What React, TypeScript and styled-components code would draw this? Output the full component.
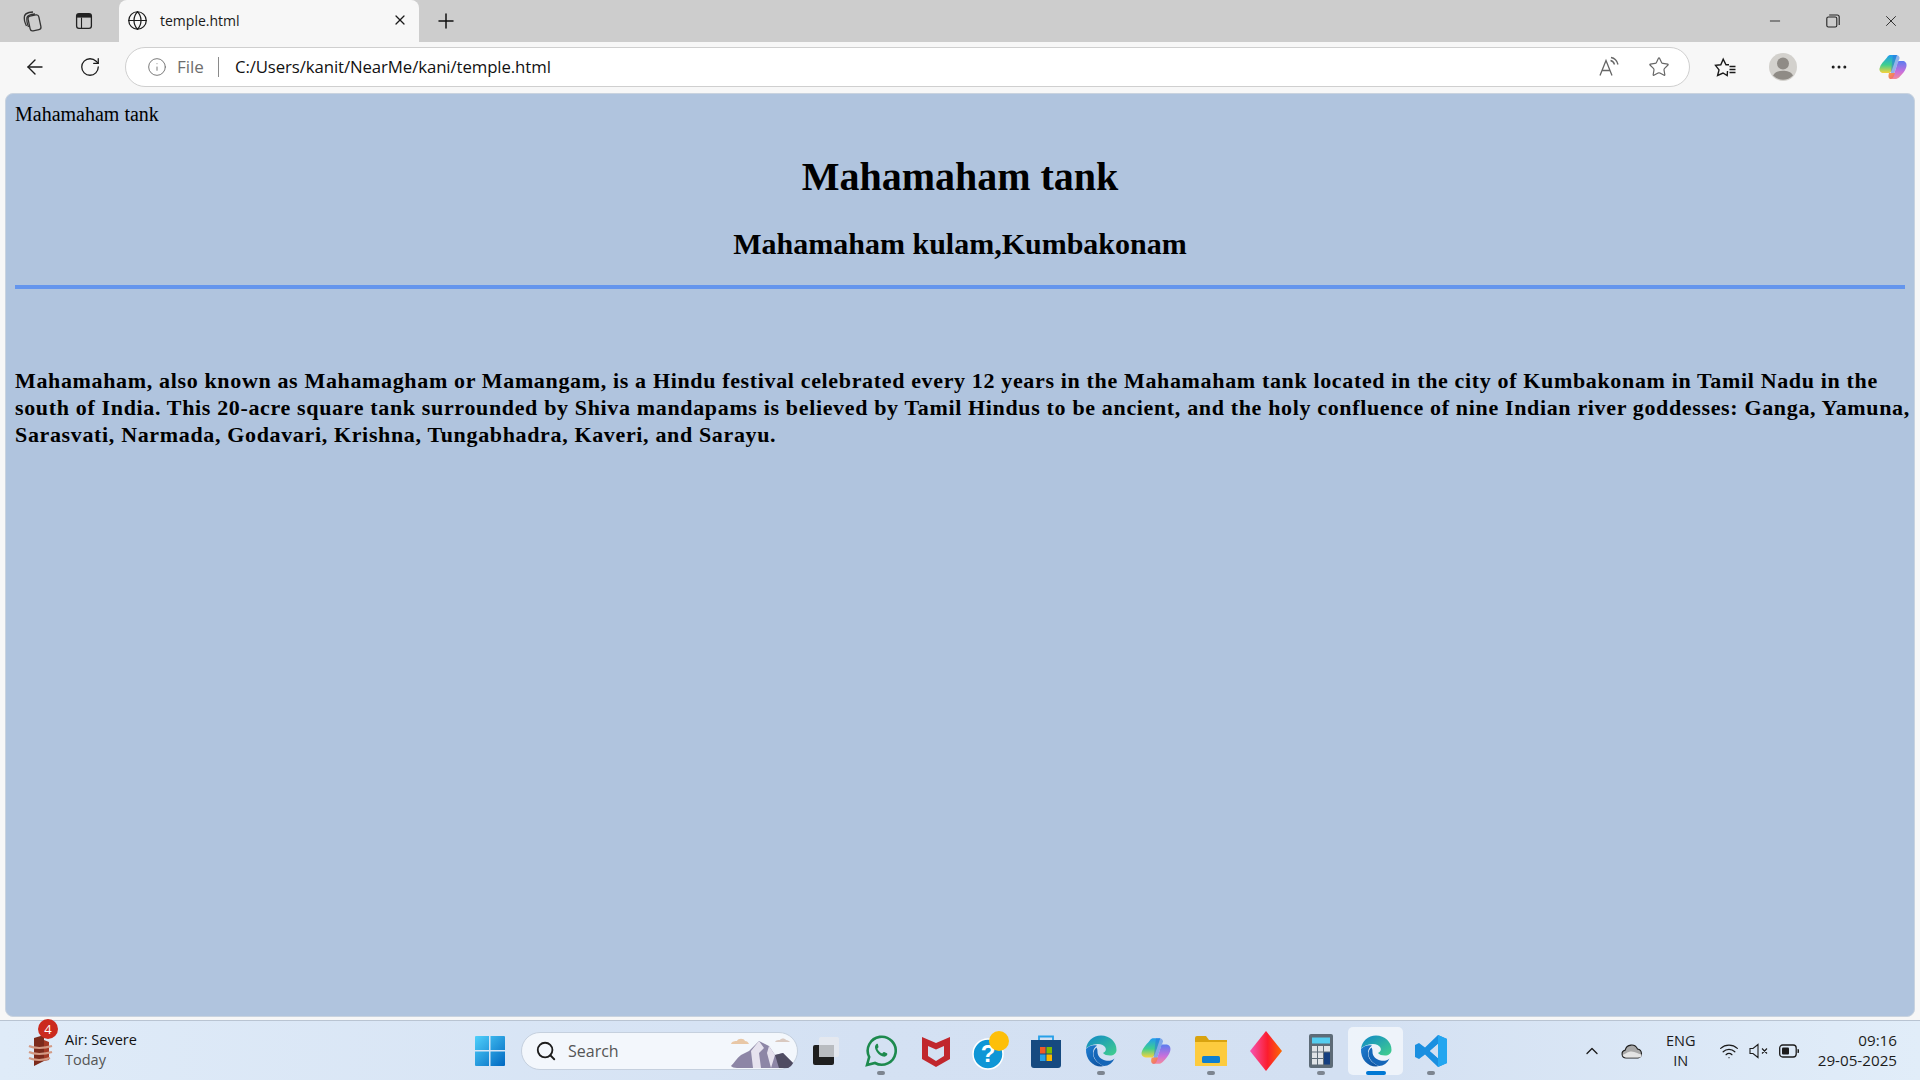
import React from "react";
import styled, { createGlobalStyle } from "styled-components";
import { ArrowLeft, RotateCw, Info, Plus, X, Minus, Star, Globe, Search, ChevronUp, Wifi, MoreHorizontal } from "lucide-react";

const GlobalStyle = createGlobalStyle`
  html, body { margin: 0; padding: 0; height: 100%; overflow: hidden; }
  #root { height: 100%; }
`;

const Screen = styled.div`
  width: 1920px;
  height: 1080px;
  display: flex;
  flex-direction: column;
  background: #f7f7f7;
  font-family: "Open Sans", "Noto Sans", sans-serif;
  overflow: hidden;
`;

const TabStrip = styled.div`
  height: 42px;
  flex: none;
  display: flex;
  align-items: stretch;
  background: #cdcdcd;
`;

const StripButton = styled.div`
  width: 52px;
  flex: none;
  display: flex;
  align-items: center;
  justify-content: center;
  color: #222;
`;

const StripLead = styled.div`
  display: flex;
  padding-left: 6px;
  width: 119px;
  flex: none;
  box-sizing: border-box;
`;

const Tab = styled.div`
  width: 300px;
  flex: none;
  box-sizing: border-box;
  display: flex;
  align-items: center;
  gap: 12px;
  padding: 0 11px 2px 8px;
  background: #f7f7f7;
  border-radius: 8px 8px 0 0;
  font-size: 14px;
  color: #1a1a1a;
`;

const TabTitle = styled.span`
  flex: 1;
`;

const NewTab = styled.div`
  width: 54px;
  display: flex;
  align-items: center;
  justify-content: center;
  color: #111;
`;

const WindowButtons = styled.div`
  margin-left: auto;
  display: flex;
`;

const WindowButton = styled.div`
  width: 58px;
  display: flex;
  align-items: center;
  justify-content: center;
  color: #222;
`;

const Toolbar = styled.div`
  height: 51px;
  flex: none;
  display: flex;
  align-items: center;
  box-sizing: border-box;
  padding: 0 0 2px 7px;
  background: #f7f7f7;
`;

const NavButton = styled.div`
  width: 55px;
  height: 40px;
  flex: none;
  display: flex;
  align-items: center;
  justify-content: center;
  color: #1c1c1c;
`;

const AddressBar = styled.div`
  width: 1565px;
  height: 40px;
  flex: none;
  margin-left: 8px;
  box-sizing: border-box;
  display: flex;
  align-items: center;
  padding: 0 19px 0 21px;
  background: #fff;
  border: 1px solid #cfcfcf;
  border-radius: 20px;
`;

const FileLabel = styled.span`
  margin-left: 10px;
  font-size: 17px;
  color: #6e6e6e;
`;

const Divider = styled.span`
  width: 1px;
  height: 20px;
  margin: 0 16px 0 14px;
  background: #8a8a8a;
`;

const Url = styled.span`
  flex: 1;
  font-size: 16.8px;
  color: #111;
  letter-spacing: -0.1px;
`;

const BarIcons = styled.div`
  display: flex;
  align-items: center;
  gap: 28px;
  color: #666;
`;

const ToolIcons = styled.div`
  display: flex;
  align-items: center;
  padding-left: 6px;
`;

const ToolSlot = styled.div<{ $width: number }>`
  width: ${(p) => p.$width}px;
  display: flex;
  align-items: center;
  justify-content: center;
  color: #1a1a1a;
`;

const Page = styled.main`
  flex: none;
  height: 924px;
  margin: 0 5px 0 5px;
  box-sizing: border-box;
  padding: 9px 9px;
  background: #b0c4de;
  border-radius: 8px;
  border: 1px solid #c9d3df;
  font-family: "Liberation Serif", "Times New Roman", serif;
  color: #000;
`;

const Lead = styled.div`
  font-size: 20px;
  line-height: 23px;
`;

const Heading = styled.h1`
  margin: 28px 0 0;
  text-align: center;
  font-size: 40px;
  line-height: 46px;
`;

const SubHeading = styled.h2`
  margin: 27px 0 0;
  text-align: center;
  font-size: 30px;
  line-height: 34px;
`;

const Rule = styled.div`
  height: 4px;
  margin-top: 24px;
  background: #6495ed;
`;

const Body = styled.p`
  margin: 78px -8px 0 0;
  font-size: 22px;
  line-height: 27px;
  font-weight: bold;
  letter-spacing: 0.65px;
`;

const Taskbar = styled.footer`
  flex: 1;
  margin-top: 3px;
  display: flex;
  align-items: center;
  border-top: 1px solid #b9c4d2;
  background: linear-gradient(90deg, #dfebf8 0%, #d4e1f3 45%, #d3e0f2 70%, #e1edf9 100%);
`;

const Weather = styled.div`
  width: 455px;
  flex: none;
  box-sizing: border-box;
  display: flex;
  align-items: center;
  padding-left: 28px;
  gap: 11px;
  position: relative;
`;

const WeatherBadge = styled.span`
  position: absolute;
  left: 38px;
  top: -11px;
  width: 20px;
  height: 20px;
  border-radius: 50%;
  background: #cb2a1e;
  color: #fff;
  font-size: 13px;
  display: flex;
  align-items: center;
  justify-content: center;
`;

const WeatherText = styled.div`
  display: flex;
  flex-direction: column;
  margin-bottom: 2px;
  font-size: 14.5px;
  line-height: 20px;
  color: #111;
`;

const Muted = styled.span`
  color: #555;
`;

const Center = styled.div`
  display: flex;
  align-items: center;
  height: 100%;
`;

const StartButton = styled.div`
  width: 66px;
  flex: none;
  display: flex;
  align-items: center;
  justify-content: center;
  padding-left: 3px;
  box-sizing: border-box;
`;

const SearchBox = styled.div`
  width: 277px;
  height: 38px;
  flex: none;
  box-sizing: border-box;
  display: flex;
  align-items: center;
  gap: 11px;
  padding-left: 13px;
  background: #f3f7fc;
  border: 1px solid #c5d0de;
  border-radius: 19px;
  font-size: 16px;
  color: #555;
`;

const SearchArt = styled.div`
  margin-left: auto;
  margin-right: 2px;
  display: flex;
`;

const TaskIcon = styled.div<{ $active?: boolean }>`
  width: 55px;
  height: 48px;
  flex: none;
  position: relative;
  display: flex;
  align-items: center;
  justify-content: center;
  border-radius: 5px;
  background: ${(p) => (p.$active ? "rgba(255,255,255,0.6)" : "transparent")};
`;

const RunDot = styled.span<{ $active?: boolean }>`
  position: absolute;
  bottom: 0;
  left: 50%;
  transform: translateX(-50%);
  width: ${(p) => (p.$active ? "20px" : "8px")};
  height: 4px;
  border-radius: 2px;
  background: ${(p) => (p.$active ? "#0078d4" : "#7d8590")};
`;

const Tray = styled.div`
  margin-left: auto;
  display: flex;
  align-items: center;
  color: #1c1c1c;
  padding-right: 23px;
`;

const TrayChevron = styled.div`
  display: flex;
  margin-right: 19px;
`;

const Lang = styled.div`
  width: 34px;
  margin: 0 21px 0 21px;
  text-align: center;
  font-size: 14.5px;
  line-height: 20px;
`;

const TrayIcons = styled.div`
  display: flex;
  align-items: center;
  gap: 10px;
  margin-right: 19px;
`;

const Clock = styled.div`
  margin-bottom: 2px;
  text-align: right;
  font-size: 15.2px;
  line-height: 20px;
`;

const TabsIcon = () => (
  <svg width="24" height="24" viewBox="0 0 24 24" fill="none" stroke="#333" strokeWidth="1.3">
    <rect x="9" y="6.5" width="11" height="15" rx="2.5" transform="rotate(-12 14 14)" />
    <path d="M6.5 17 C4.5 13 3.8 10 4.5 7 C5 5 7 4 9 3.5 L13 3" />
    <path d="M8.5 18 C7 14 6.5 11 7 8.5 C7.5 6.5 10 5.5 15 5" />
  </svg>
);

const VerticalTabsIcon = () => (
  <svg width="20" height="20" viewBox="0 0 20 20">
    <rect x="2.6" y="2.6" width="14.8" height="14.8" rx="2.4" fill="none" stroke="#222" strokeWidth="1.3" />
    <path d="M3 3h14v3.6H3z" fill="#222" />
    <path d="M7.5 6.5v11" stroke="#222" strokeWidth="1.1" />
  </svg>
);

const RestoreIcon = () => (
  <svg width="14" height="14" viewBox="0 0 14 14" fill="none" stroke="#222" strokeWidth="1.1">
    <rect x="0.8" y="3" width="10" height="10" rx="1.6" />
    <path d="M3.2 1h8a2 2 0 0 1 2 2v8" />
  </svg>
);

const ReadAloudIcon = () => (
  <svg width="22" height="22" viewBox="0 0 22 22" fill="none" stroke="#666" strokeWidth="1.3">
    <path d="M2 19.5 8 4.5 14 19.5M4.2 14.5h7.6" />
    <path d="M12.5 4.5c2 .4 3.4 1.8 4 4M13 1.5c3.4.6 6 3 7 7" />
  </svg>
);

const FavoritesIcon = () => (
  <svg width="22" height="22" viewBox="0 0 22 22" fill="none" stroke="#1a1a1a" strokeWidth="1.4">
    <path d="M13.5 15 13.2 19.5 9 17 3.6 19.5 5 13.9 1.5 9.4 6.8 8.8 9.2 3.2 12 8.8h3" />
    <path d="M15.5 10.5h6M15.5 13.5h6M15.5 16.5h6" />
  </svg>
);

const Avatar = () => (
  <svg width="28" height="28" viewBox="0 0 28 28">
    <circle cx="14" cy="14" r="14" fill="#d3d1cd" />
    <circle cx="14" cy="10.5" r="6" fill="#8f8b86" />
    <path d="M4 22.5c2-4 6-4.8 10-4.8s8 .8 10 4.8a14 14 0 0 1-20 0z" fill="#8f8b86" />
  </svg>
);

const Copilot = ({ size = 30 }: { size?: number }) => (
  <svg width={size} height={size} viewBox="0 0 30 30">
    <defs>
      <linearGradient id="copA" x1="0" y1="0" x2="0" y2="1">
        <stop offset="0" stopColor="#1f9bf0" />
        <stop offset="0.55" stopColor="#3fcf8e" />
        <stop offset="1" stopColor="#f7d33c" />
      </linearGradient>
      <linearGradient id="copB" x1="0" y1="0" x2="0" y2="1">
        <stop offset="0" stopColor="#5a7cf0" />
        <stop offset="0.6" stopColor="#c86fdc" />
        <stop offset="1" stopColor="#f58a9a" />
      </linearGradient>
      <linearGradient id="copC" x1="0" y1="0" x2="1" y2="1">
        <stop offset="0" stopColor="#f5a04a" />
        <stop offset="1" stopColor="#f0607a" />
      </linearGradient>
    </defs>
    <path d="M9 5.5C10 3.5 11.5 3 13 3h6L15 15c-1.2 4-2.4 6-4 6H5.5C3 21 1 19 1.5 16.5 2.3 12.5 6 9 9 5.5z" fill="url(#copA)" />
    <path d="M15 3h3.5C20 3 21 4 21.5 5.5 22 7 20 9 19 13l-2 6c-1 3.5-2.5 7-4.5 8h-.5" fill="#2b6fe0" opacity="0.5" />
    <path d="M21 9h3.5C27 9 29 11 28.5 14c-.6 4-4 8-7 11-1.5 1.5-3 2-4.5 2h-5c2.5-1 4-4 5-8l2-6c.5-2 1-4 2-4z" fill="url(#copB)" />
    <path d="M11 21h6l-1.5 4c-.7 1.4-2 2-3.5 2-1.6-.5-2-3-1-6z" fill="url(#copC)" />
  </svg>
);

const WeatherIcon = () => (
  <svg width="26" height="38" viewBox="0 0 26 38">
    <path d="M6 6l10-3v26L6 34z" fill="#7c2b1c" />
    <path d="M16 8l5 2v18l-5 1z" fill="#a33a25" />
    <path d="M1 14c5 2.5 15 2.5 23 0M1 20c5 2.5 15 2.5 23 0M1 26c5 2.5 15 2.5 21 0" stroke="#d39a84" strokeWidth="2" fill="none" />
  </svg>
);

const WindowsLogo = () => (
  <svg width="30" height="30" viewBox="0 0 30 30">
    <defs>
      <linearGradient id="winG" x1="0" y1="0" x2="1" y2="1">
        <stop offset="0" stopColor="#4fd0fb" />
        <stop offset="1" stopColor="#0067c0" />
      </linearGradient>
    </defs>
    <path d="M0 1a1 1 0 0 1 1-1h13v14H0zM15.5 0H29a1 1 0 0 1 1 1v13H15.5zM0 15.5h14V30H1a1 1 0 0 1-1-1zM15.5 15.5H30V29a1 1 0 0 1-1 1H15.5z" fill="url(#winG)" />
  </svg>
);

const Mountains = () => (
  <svg width="66" height="36" viewBox="0 0 66 36">
    <path d="M2 11c1-3 4-3 6-3 1-3 7-3 8 0 2 0 3 1 4 3z" fill="#e8c7a6" />
    <path d="M46 9c1-2 3-2 5-2 1-2 5-2 6 0 2 0 3 1 4 2z" fill="#d9c9c0" />
    <path d="M2 33c3-3 6-8 10-11l8-4 10-10 10 5 6 9 8-2 10 10c-1 2-3 4-5 5H8c-3 0-5-1-6-2z" fill="#8d86a6" />
    <path d="M22 18l8-10 5 7-5 5 2 15H24zM40 13l6 9-4 13-4-15z" fill="#e6e2ee" />
    <path d="M46 22l8-2 10 10c-1 2-3 4-5 5h-9z" fill="#4f4c62" />
  </svg>
);

const TaskView = () => (
  <svg width="28" height="30" viewBox="0 0 28 30">
    <rect x="1" y="9" width="21" height="20" rx="2" fill="#1f1f1f" />
    <rect x="7" y="1" width="20" height="20" rx="2" fill="#e6e9ee" opacity="0.9" />
    <rect x="7" y="9" width="15" height="12" fill="#b9bcc0" />
  </svg>
);

const WhatsApp = () => (
  <svg width="32" height="32" viewBox="0 0 32 32">
    <path d="M2 30l2.2-8A14 14 0 1 1 10 28z" fill="none" stroke="#1d8a4e" strokeWidth="2.6" />
    <path d="M11.5 9c-1.5 1-2 3-1 5.5 1.5 3.5 4 6 7.5 7 2 .5 3.5-.3 4.3-2 .2-.5 0-1-.4-1.2l-2.7-1.3c-.5-.2-.9 0-1.2.4l-.8 1c-2.3-.9-3.9-2.5-4.9-4.7l.9-1c.3-.3.3-.8.2-1.1L12.9 9.3c-.3-.6-.9-.6-1.4-.3z" fill="#1d8a4e" />
  </svg>
);

const McAfee = () => (
  <svg width="28" height="32" viewBox="0 0 28 32">
    <path d="M0 2l14 6 14-6v22l-14 8-14-8zM6 11v10l8 5 8-5V11l-8 3.5z" fill="#c1272d" fillRule="evenodd" />
  </svg>
);

const HelpIcon = () => (
  <svg width="42" height="40" viewBox="0 0 42 40">
    <circle cx="18" cy="23" r="15" fill="#0f96d6" stroke="#fff" strokeWidth="1.5" />
    <text x="18" y="31" textAnchor="middle" fontSize="24" fontWeight="700" fill="#fff" fontFamily="Liberation Sans, sans-serif">?</text>
    <circle cx="29" cy="10" r="10" fill="#fdbf0a" />
  </svg>
);

const StoreIcon = () => (
  <svg width="30" height="34" viewBox="0 0 30 34">
    <path d="M8 6V2.5h14V6" fill="none" stroke="#27a0e8" strokeWidth="1.8" />
    <path d="M0 6h30v25a3 3 0 0 1-3 3H3a3 3 0 0 1-3-3z" fill="#164a80" />
    <rect x="9" y="13" width="5.5" height="6.5" fill="#f05a28" />
    <rect x="15.5" y="13" width="5.5" height="6.5" fill="#7fba00" />
    <rect x="9" y="20.5" width="5.5" height="6.5" fill="#27a0e8" />
    <rect x="15.5" y="20.5" width="5.5" height="6.5" fill="#fdb900" />
  </svg>
);

const Edge = ({ id }: { id: string }) => (
  <svg width="32" height="32" viewBox="0 0 32 32">
    <defs>
      <linearGradient id={`${id}a`} x1="0" y1="0" x2="1" y2="1">
        <stop offset="0" stopColor="#0f86c9" />
        <stop offset="1" stopColor="#43d18c" />
      </linearGradient>
      <linearGradient id={`${id}b`} x1="0" y1="0" x2="1" y2="1">
        <stop offset="0" stopColor="#1f7fd4" />
        <stop offset="1" stopColor="#0b4c98" />
      </linearGradient>
    </defs>
    <path d="M1 14C2 6 8 .5 16 .5c9 0 15.5 6.5 15.5 14.5 0 3.5-3 5.5-6.5 5.5-3 0-6-.8-7-2.5 2.5-1 3.5-3 2.5-5.2C19 9.5 14 8 9 9.5 5 10.5 2 12 1 14z" fill={`url(#${id}a)`} />
    <path d="M1 14c2.5-3 7-4.5 11-3.5-3 2-4.5 5-4 9 .7 5 5 9.5 11 11.5-1 .3-2 .5-3 .5C7.5 31.5 .5 24 1 14z" fill={`url(#${id}b)`} />
    <path d="M12.5 17c0 4 3.5 7.5 8 8.5 3.5.8 7 0 9-2-2 4.5-6 7.5-10.5 7.5-5-2-9.5-6-10.5-11-.4-3 .6-5.5 3-7.5.8 1.2 1 2.8 1 4.5z" fill="#1566b8" />
  </svg>
);

const FolderIcon = () => (
  <svg width="32" height="30" viewBox="0 0 32 30">
    <path d="M0 2a2 2 0 0 1 2-2h9l3 4h18v26H0z" fill="#d9a30f" />
    <path d="M0 6h32v24H0z" fill="#fdcb3e" />
    <rect x="7" y="20" width="18" height="7" rx="1.5" fill="#0f7fd0" />
  </svg>
);

const DiamondIcon = () => (
  <svg width="32" height="40" viewBox="0 0 32 40">
    <defs>
      <linearGradient id="diaG" x1="0" y1="0" x2="1" y2="0">
        <stop offset="0" stopColor="#f654b4" />
        <stop offset="0.55" stopColor="#fb1d2e" />
        <stop offset="1" stopColor="#fb6a00" />
      </linearGradient>
    </defs>
    <path d="M16 0l16 20-16 20L0 20z" fill="url(#diaG)" />
  </svg>
);

const Calculator = () => (
  <svg width="24" height="34" viewBox="0 0 24 34">
    <rect width="24" height="34" rx="2" fill="#5d6b77" />
    <rect x="3" y="3.5" width="18" height="6" fill="#54cdf0" />
    {[0, 1, 2].map((r) =>
      [0, 1].map((c) => <rect key={`${r}${c}`} x={3 + c * 6} y={12 + r * 6.5} width="5" height="5.5" fill="#dfe3e7" />),
    )}
    <rect x="15" y="12" width="6" height="5.5" fill="#dfe3e7" />
    <rect x="15" y="18.5" width="6" height="12" fill="#153f80" />
  </svg>
);

const VsCode = () => (
  <svg width="32" height="32" viewBox="0 0 32 32">
    <path d="M23 0l9 4v24l-9 4-13-12.5-6 4.500-4-2v-12l4-2 6 4.500zM23 9l-8 7 8 7z" fill="#1a8fe0" fillRule="evenodd" />
    <path d="M23 0l9 4v24l-9 4z" fill="#23a6f0" />
    <path d="M23 9v14l-8-7z" fill="#d3e0f2" />
  </svg>
);

const CloudIcon = () => (
  <svg width="22" height="16" viewBox="0 0 22 16">
    <path d="M5 15a4 4 0 0 1-.8-7.9A6.500 6.500 0 0 1 16.500 6 4.600 4.600 0 0 1 17 15z" fill="#a8a8a8" stroke="#1c1c1c" strokeWidth="1.1" />
    <path d="M1.500 12c3-1 5-3.500 9-3.500 4 0 6 2.500 10 3v1a2.500 2.500 0 0 1-3 2H5a4 4 0 0 1-3.500-2.500z" fill="#e4e4e4" />
  </svg>
);

const MuteIcon = () => (
  <svg width="20" height="16" viewBox="0 0 20 16" fill="none" stroke="#1c1c1c" strokeWidth="1.1">
    <path d="M1 5.500h3L9 1.500v13l-5-4H1zM13 5.500l5 5M18 5.500l-5 5" />
  </svg>
);

const BatteryIcon = () => (
  <svg width="20" height="14" viewBox="0 0 20 14">
    <rect x="0.7" y="1" width="16.5" height="12" rx="3" fill="none" stroke="#1c1c1c" strokeWidth="1.3" />
    <rect x="3" y="3.5" width="7" height="7" rx="1" fill="#1c1c1c" />
    <path d="M18.5 5a2 2 0 0 1 0 4z" fill="#1c1c1c" />
  </svg>
);

const App = () => {
  return (
    <Screen>
      <GlobalStyle />
      <TabStrip>
        <StripLead>
          <StripButton><TabsIcon /></StripButton>
          <StripButton><VerticalTabsIcon /></StripButton>
        </StripLead>
        <Tab>
          <Globe size={21} strokeWidth={1.4} />
          <TabTitle>temple.html</TabTitle>
          <X size={16} strokeWidth={1.9} />
        </Tab>
        <NewTab><Plus size={24} strokeWidth={1.5} /></NewTab>
        <WindowButtons>
          <WindowButton><Minus size={16} strokeWidth={1.3} /></WindowButton>
          <WindowButton><RestoreIcon /></WindowButton>
          <WindowButton><X size={18} strokeWidth={1.2} /></WindowButton>
        </WindowButtons>
      </TabStrip>
      <Toolbar>
        <NavButton><ArrowLeft size={24} strokeWidth={1.4} /></NavButton>
        <NavButton><RotateCw size={22} strokeWidth={1.4} /></NavButton>
        <AddressBar>
          <Info size={20} strokeWidth={1.1} color="#6e6e6e" />
          <FileLabel>File</FileLabel>
          <Divider />
          <Url>C:/Users/kanit/NearMe/kani/temple.html</Url>
          <BarIcons>
            <ReadAloudIcon />
            <Star size={22} strokeWidth={1.3} />
          </BarIcons>
        </AddressBar>
        <ToolIcons>
          <ToolSlot $width={58}><FavoritesIcon /></ToolSlot>
          <ToolSlot $width={58}><Avatar /></ToolSlot>
          <ToolSlot $width={54}><MoreHorizontal size={20} strokeWidth={1.6} /></ToolSlot>
          <ToolSlot $width={54}><Copilot /></ToolSlot>
        </ToolIcons>
      </Toolbar>
      <Page>
        <Lead>Mahamaham tank</Lead>
        <Heading>Mahamaham tank</Heading>
        <SubHeading>Mahamaham kulam,Kumbakonam</SubHeading>
        <Rule />
        <Body>
          Mahamaham, also known as Mahamagham or Mamangam, is a Hindu festival celebrated every 12 years in the
          Mahamaham tank located in the city of Kumbakonam in Tamil Nadu in the south of India. This 20-acre square
          tank surrounded by Shiva mandapams is believed by Tamil Hindus to be ancient, and the holy confluence of nine
          Indian river goddesses: Ganga, Yamuna, Sarasvati, Narmada, Godavari, Krishna, Tungabhadra, Kaveri, and Sarayu.
        </Body>
      </Page>
      <Taskbar>
        <Weather>
          <WeatherIcon />
          <WeatherBadge>4</WeatherBadge>
          <WeatherText>
            <span>Air: Severe</span>
            <Muted>Today</Muted>
          </WeatherText>
        </Weather>
        <Center>
          <StartButton><WindowsLogo /></StartButton>
          <SearchBox>
            <Search size={22} strokeWidth={2} color="#1c1c1c" />
            Search
            <SearchArt><Mountains /></SearchArt>
          </SearchBox>
          <TaskIcon><TaskView /></TaskIcon>
          <TaskIcon><WhatsApp /><RunDot /></TaskIcon>
          <TaskIcon><McAfee /></TaskIcon>
          <TaskIcon><HelpIcon /></TaskIcon>
          <TaskIcon><StoreIcon /></TaskIcon>
          <TaskIcon><Edge id="edgeA" /><RunDot /></TaskIcon>
          <TaskIcon><Copilot size={32} /></TaskIcon>
          <TaskIcon><FolderIcon /><RunDot /></TaskIcon>
          <TaskIcon><DiamondIcon /></TaskIcon>
          <TaskIcon><Calculator /><RunDot /></TaskIcon>
          <TaskIcon $active><Edge id="edgeB" /><RunDot $active /></TaskIcon>
          <TaskIcon><VsCode /><RunDot /></TaskIcon>
        </Center>
        <Tray>
          <TrayChevron><ChevronUp size={20} strokeWidth={1.6} /></TrayChevron>
          <CloudIcon />
          <Lang>ENG<br />IN</Lang>
          <TrayIcons>
            <Wifi size={20} strokeWidth={1.5} />
            <MuteIcon />
            <BatteryIcon />
          </TrayIcons>
          <Clock>09:16<br />29-05-2025</Clock>
        </Tray>
      </Taskbar>
    </Screen>
  );
};

export default App;
